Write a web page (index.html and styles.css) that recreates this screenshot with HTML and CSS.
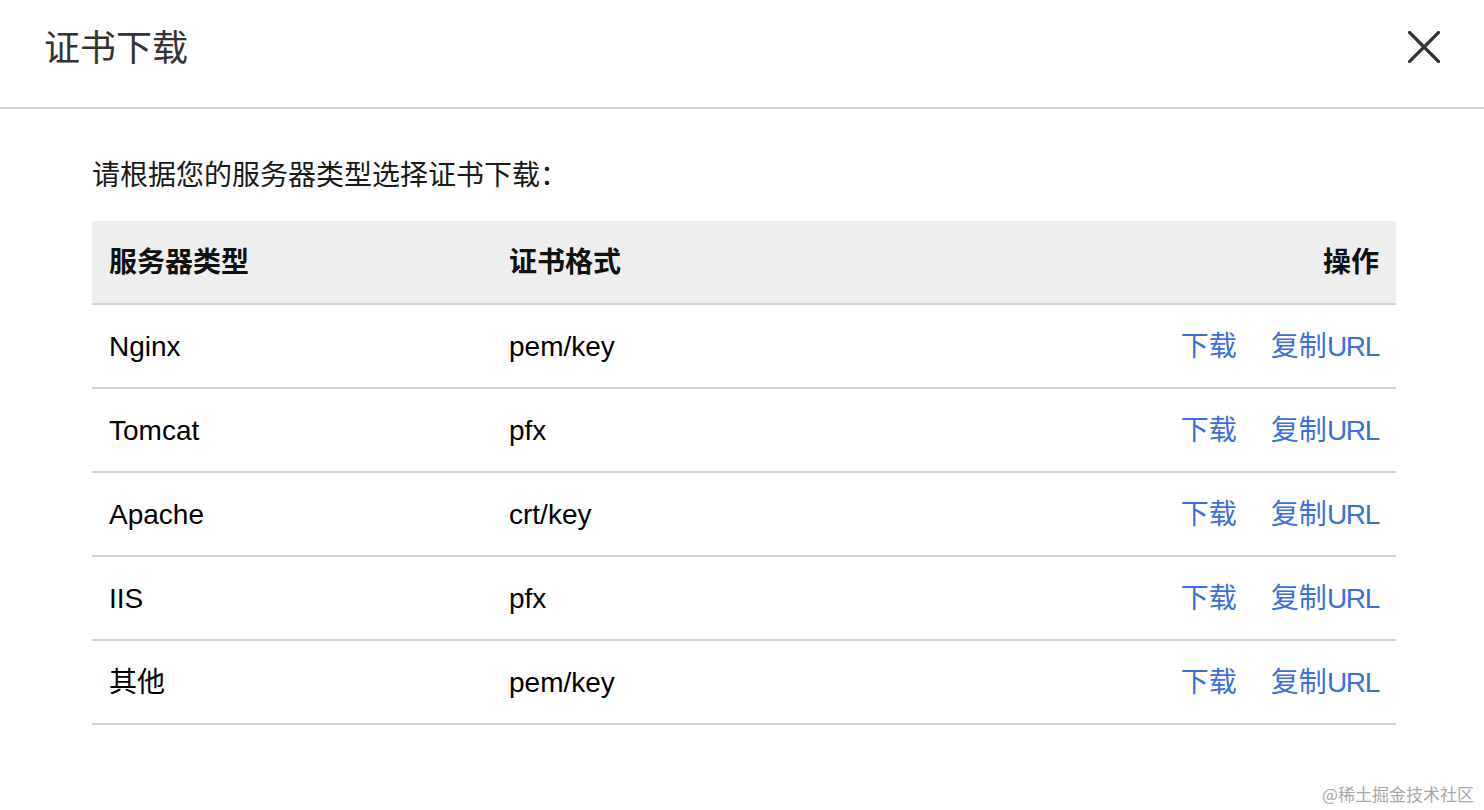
FILE: index.html
```html
<!DOCTYPE html>
<html lang="zh-CN">
<head>
<meta charset="utf-8">
<title>证书下载</title>
<link rel="stylesheet" href="styles.css">
</head>
<body>
<div class="dialog">
  <header class="dialog-header">
    <h1 class="dialog-title">证书下载</h1>
    <button class="close-btn" aria-label="关闭">
      <svg width="32" height="32" viewBox="0 0 32 32"><path d="M1.5 1.5 L30.5 30.5 M30.5 1.5 L1.5 30.5" stroke="#333" stroke-width="3.2" stroke-linecap="square" fill="none"/></svg>
    </button>
  </header>
  <main class="dialog-body">
    <p class="intro">请根据您的服务器类型选择证书下载：</p>
    <table class="cert-table">
      <thead>
        <tr>
          <th class="col-server">服务器类型</th>
          <th class="col-format">证书格式</th>
          <th class="col-action">操作</th>
        </tr>
      </thead>
      <tbody>
        <tr><td>Nginx</td><td>pem/key</td><td class="col-action"><a class="link">下载</a><a class="link link-gap">复制<span class="latin">URL</span></a></td></tr>
        <tr><td>Tomcat</td><td>pfx</td><td class="col-action"><a class="link">下载</a><a class="link link-gap">复制<span class="latin">URL</span></a></td></tr>
        <tr><td>Apache</td><td>crt/key</td><td class="col-action"><a class="link">下载</a><a class="link link-gap">复制<span class="latin">URL</span></a></td></tr>
        <tr><td>IIS</td><td>pfx</td><td class="col-action"><a class="link">下载</a><a class="link link-gap">复制<span class="latin">URL</span></a></td></tr>
        <tr><td>其他</td><td>pem/key</td><td class="col-action"><a class="link">下载</a><a class="link link-gap">复制<span class="latin">URL</span></a></td></tr>
      </tbody>
    </table>
  </main>
</div>
<div class="watermark">@稀土掘金技术社区</div>
</body>
</html>
```
FILE: styles.css
```css
html, body {
  margin: 0;
  padding: 0;
  background: #fff;
}
body {
  width: 1484px;
  height: 810px;
  overflow: hidden;
  position: relative;
  font-family: "Liberation Sans", "Noto Sans CJK SC", sans-serif;
  color: #111;
}
.dialog-header {
  box-sizing: border-box;
  height: 109px;
  display: flex;
  align-items: center;
  justify-content: space-between;
  padding: 0 44px 0 44px;
  border-bottom: 2px solid #d2d2d2;
}
.dialog-title {
  margin: 0;
  font-size: 36px;
  font-weight: 400;
  color: #333;
  line-height: 44px;
  margin-top: -9px;
}
.close-btn {
  border: 0;
  background: none;
  padding: 0;
  width: 32px;
  height: 32px;
  display: flex;
  margin-top: -13px;
  cursor: pointer;
}
.dialog-body {
  padding: 0 88px 0 92px;
}
.intro {
  margin: 47px 0 0 0;
  font-size: 28px;
  line-height: 40px;
  color: #1a1a1a;
}
.cert-table {
  margin-top: 25px;
  width: 1304px;
  border-collapse: collapse;
  font-size: 28px;
}
.cert-table th,
.cert-table td {
  height: 80px;
  padding: 2px 17px 0 17px;
  border-bottom: 2px solid #d4d4d4;
  text-align: left;
  line-height: 36px;
  vertical-align: middle;
  color: #000;
}
.cert-table thead th {
  background: #eeeeee;
  font-weight: 700;
  color: #111;
}
.col-server { width: 366px; }
.col-format { width: 366px; }
.cert-table .col-action { text-align: right; }
.link {
  color: #3b6fdf;
  cursor: pointer;
}
.link-gap {
  margin-left: 34px;
}
.latin {
  letter-spacing: -1.3px;
}
.watermark {
  position: absolute;
  right: 10px;
  bottom: 4px;
  font-size: 17px;
  color: #a8a8a8;
  font-family: "Noto Sans CJK SC", sans-serif;
  line-height: 24px;
}
```
